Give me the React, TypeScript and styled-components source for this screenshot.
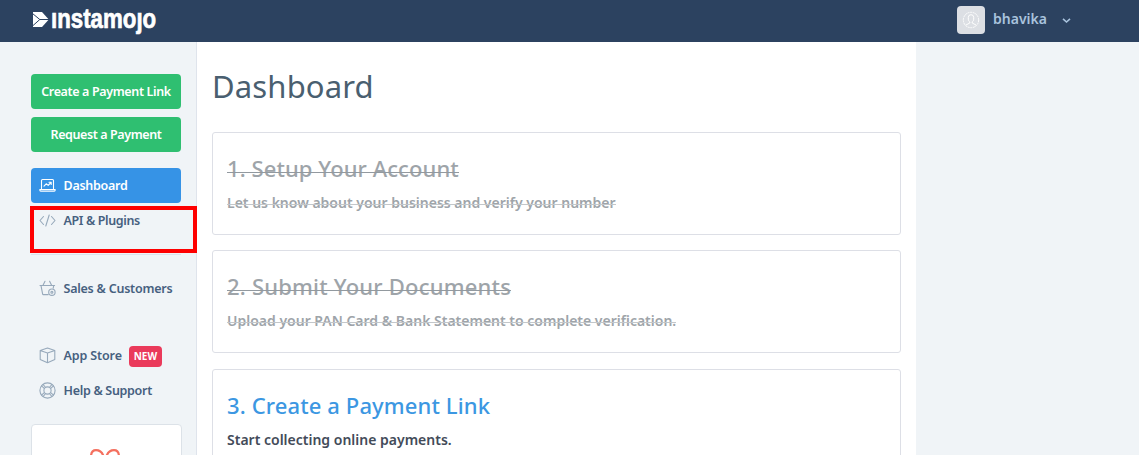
import React from "react";
import styled, { createGlobalStyle, css } from "styled-components";

const Global = createGlobalStyle`
  *, *::before, *::after { box-sizing: border-box; }
  html, body { margin: 0; height: 100%; overflow: hidden; }
  body { background: #f0f4f7; font-family: "Noto Sans", "Open Sans", sans-serif; }
`;

const Page = styled.div`
  height: 455px;
  display: flex;
  flex-direction: column;
  overflow: hidden;
`;

const Header = styled.header`
  height: 42px;
  flex: none;
  background: #2c4260;
  display: flex;
  justify-content: space-between;
  padding: 0 68px 0 33px;
`;

const Brand = styled.div`
  display: flex;
  align-items: flex-start;
  color: #fff;
  svg { margin-top: 12px; }
`;

const BrandName = styled.span`
  display: block;
  width: 106px;
  margin: 3px 0 0 1px;
  font: bold 27.5px/32px "Liberation Sans", Arial, sans-serif;
  white-space: nowrap;
  -webkit-text-stroke: 0.7px #fff;
  transform: scaleX(0.81);
  transform-origin: 0 0;
`;

const Account = styled.div`
  display: flex;
  align-items: center;
  height: 40px;
  color: #a9c3dd;
`;

const Avatar = styled.div`
  width: 28px;
  height: 28px;
  border-radius: 4px;
  background: #dcdfe4;
  display: flex;
  align-items: center;
  justify-content: center;
  margin-right: 8px;
`;

const Label = styled.span<{ $size?: number; $weight?: number; $track?: number }>`
  font-size: ${(p) => p.$size ?? 12.5}px;
  font-weight: ${(p) => p.$weight ?? 600};
  letter-spacing: ${(p) => p.$track ?? 0}px;
  line-height: 20px;
  white-space: nowrap;
`;

const UserName = styled(Label)`
  width: 69px;
  margin-top: -2px;
`;

const Body = styled.div`
  display: flex;
  flex: 1;
  min-height: 0;
`;

const Sidebar = styled.aside`
  width: 197px;
  flex: none;
  border-right: 1px solid #dfe4ec;
  padding: 32px 0 0 31px;
`;

const ActionButton = styled.button`
  display: flex;
  align-items: center;
  justify-content: center;
  width: 150px;
  height: 35px;
  margin: 0 0 8px;
  padding: 0;
  border: 0;
  border-radius: 4px;
  background: #2fbf71;
  color: #fff;
  font-family: inherit;
`;

const Nav = styled.nav`
  margin-top: 16px;
  width: 150px;
`;

const NavItem = styled.a<{ $active?: boolean }>`
  display: flex;
  align-items: center;
  height: 35px;
  padding-left: 8px;
  border-radius: 4px;
  color: #46607f;
  svg { flex: none; margin-right: 7.5px; color: #97a9bb; }
  ${(p) =>
    p.$active &&
    css`
      background: #3693e6;
      color: #fff;
      svg { color: #fff; }
    `}
`;

const Highlight = styled.div`
  position: relative;
  &::after {
    content: "";
    position: absolute;
    left: -1px;
    top: 3px;
    width: 167px;
    height: 47px;
    border: 4px solid #fe0000;
  }
`;

const Divider = styled.hr<{ $hidden?: boolean }>`
  height: ${(p) => (p.$hidden ? 0 : 1)}px;
  border: 0;
  margin: 16px 0;
  background: #dbe2ec;
`;

const Badge = styled.span`
  display: flex;
  align-items: center;
  justify-content: center;
  width: 33px;
  height: 21px;
  margin: 1px 0 0 7px;
  border-radius: 4px;
  background: #ea3a5b;
  color: #fff;
`;

const Promo = styled.div`
  width: 151px;
  height: 150px;
  margin-top: 16px;
  border: 1px solid #dce2e8;
  border-radius: 4px;
  background: #fff;
  display: flex;
  justify-content: center;
  padding-top: 23px;
  padding-right: 4px;
`;

const Main = styled.main`
  width: 719px;
  background: #fff;
  padding: 22px 15px 0;
`;

const Title = styled.h1`
  margin: 0;
  height: 68px;
  font-size: 31px;
  line-height: 44px;
  font-weight: 400;
  letter-spacing: 0.15px;
  color: #4a5f70;
`;

const Card = styled.section<{ $done?: boolean }>`
  height: 103px;
  width: 689px;
  margin-bottom: 15.4px;
  padding: 19px 14px;
  border: 1px solid #dddfe6;
  border-radius: 3px;
  color: ${(p) => (p.$done ? "#9ea4a9" : "#434b59")};
`;

const strike = (top: number, color: string) => css`
  &::after {
    content: "";
    position: absolute;
    left: 0;
    right: 0;
    top: ${top}px;
    height: 1px;
    background: ${color};
  }
`;

const CardTitle = styled.h2<{ $track: number; $done: boolean }>`
  position: relative;
  width: max-content;
  margin: 0 0 9px;
  font-size: 22px;
  line-height: 32px;
  font-weight: 500;
  white-space: nowrap;
  letter-spacing: ${(p) => p.$track}px;
  color: ${(p) => (p.$done ? "inherit" : "#3c97e2")};
  ${(p) => p.$done && strike(20, "#92999f")}
`;

const CardText = styled.p<{ $done: boolean }>`
  position: relative;
  width: max-content;
  margin: 0;
  font-size: 14px;
  line-height: 20px;
  font-weight: 600;
  white-space: nowrap;
  ${(p) => p.$done && strike(11, "#c3c7ca")}
`;

const Icon = ({ children }: { children: React.ReactNode }) => (
  <svg width="17" height="17" viewBox="0 0 17 17" fill="none" stroke="currentColor" strokeWidth="1.1" strokeLinecap="round" strokeLinejoin="round">
    {children}
  </svg>
);

const steps = [
  { title: "1. Setup Your Account", text: "Let us know about your business and verify your number", done: true, track: 0.08 },
  { title: "2. Submit Your Documents", text: "Upload your PAN Card & Bank Statement to complete verification.", done: true, track: 0.2 },
  { title: "3. Create a Payment Link", text: "Start collecting online payments.", done: false, track: 0.12 },
];

export default function App() {
  return (
    <Page>
      <Global />
      <Header>
        <Brand>
          <svg width="17" height="15" viewBox="0 0 17 15">
            <path d="M0 0H9L15.8 7.5L9 15H0Z" fill="#fff" />
            <path d="M-0.5 1.5L6.8 7.5L-0.5 14M6.8 7.5H16" fill="none" stroke="#2c4260" strokeWidth="1" />
          </svg>
          <BrandName>ınstamoȷo</BrandName>
        </Brand>
        <Account>
          <Avatar>
            <svg width="18" height="18" viewBox="0 0 18 18" fill="none" stroke="#fff" strokeWidth="1">
              <circle cx="9" cy="9" r="7.7" strokeDasharray="2 .7" />
              <path d="M6.3 6.4a2.7 2.7 0 0 1 5.4 0v1.8c0 1.2-.7 2.2-1.5 2.8v1l3.8 2M6.3 6.4v1.8c0 1.2.7 2.2 1.5 2.8v1L4 14" />
            </svg>
          </Avatar>
          <UserName $size={14}>bhavika</UserName>
          <svg width="9" height="7" viewBox="0 0 9 7" fill="none" stroke="currentColor" strokeWidth="1.6">
            <path d="M1 1.8L4.5 5L8 1.8" />
          </svg>
        </Account>
      </Header>
      <Body>
        <Sidebar>
          <ActionButton><Label $track={-0.36}>Create a Payment Link</Label></ActionButton>
          <ActionButton><Label $track={-0.4}>Request a Payment</Label></ActionButton>
          <Nav>
            <NavItem $active>
              <Icon>
                <path d="M2.5 11.5V3.5a1 1 0 0 1 1-1h10a1 1 0 0 1 1 1v8M.8 12.5h15.4v.6a1 1 0 0 1-1 1H1.8a1 1 0 0 1-1-1z" />
                <path d="M5 9.2l2.2-2.4 2 1.6L12 5.5M10 5.3h2.2v2.2" />
              </Icon>
              <Label $track={-0.27}>Dashboard</Label>
            </NavItem>
            <Highlight>
              <NavItem>
                <Icon><path d="M4.5 4.5L1 8.5l3.5 4M12.5 4.5l3.5 4-3.5 4M10.2 3L6.8 14" /></Icon>
                <Label $track={-0.38}>API &amp; Plugins</Label>
              </NavItem>
            </Highlight>
            <Divider />
            <NavItem>
              <Icon>
                <path d="M1 5.5h14.6M2 5.7l1.6 8.2q.1.7.8.7h4.8M14.7 5.7l-.5 2.5M4 5.2l2-4M12.6 5.2l-2-4" />
                <circle cx="12.9" cy="12.2" r="3.2" />
                <circle cx="12.9" cy="12.2" r="1" />
              </Icon>
              <Label $track={-0.23}>Sales &amp; Customers</Label>
            </NavItem>
            <Divider $hidden />
            <NavItem>
              <Icon><path d="M8.5 1L15.8 3.5V12.5L8.5 15.8L1.2 12.5V3.5ZM1.2 3.5L8.5 6L15.8 3.5M8.5 6V15.8" /></Icon>
              <Label $track={-0.12}>App Store</Label>
              <Badge><Label $size={10} $weight={700}>NEW</Label></Badge>
            </NavItem>
            <NavItem>
              <Icon>
                <circle cx="8.5" cy="8.5" r="7.6" />
                <circle cx="8.5" cy="8.5" r="3.6" />
                <path d="M5 6.2L2.5 3.8M6.2 5L4 2.4M12 6.2l2.5-2.4M10.8 5L13 2.4M5 10.8l-2.5 2.4M6.2 12L4 14.6M12 10.8l2.5 2.4M10.8 12l2.2 2.6" />
              </Icon>
              <Label $track={-0.3}>Help &amp; Support</Label>
            </NavItem>
          </Nav>
          <Promo>
            <svg width="32" height="26" viewBox="0 0 32 26" fill="none" stroke="#f4705f" strokeWidth="2.2">
              <path d="M15.5 12C14.5 6 11.5 2.2 7 2.2C3.5 2.2 2 5 2 9M16.5 12C17.5 6 20.5 2.2 25 2.2C28.5 2.2 30 5 30 9" />
            </svg>
          </Promo>
        </Sidebar>
        <Main>
          <Title>Dashboard</Title>
          {steps.map((s) => (
            <Card key={s.title} $done={s.done}>
              <CardTitle $track={s.track} $done={s.done}>{s.title}</CardTitle>
              <CardText $done={s.done}>{s.text}</CardText>
            </Card>
          ))}
        </Main>
      </Body>
    </Page>
  );
}
